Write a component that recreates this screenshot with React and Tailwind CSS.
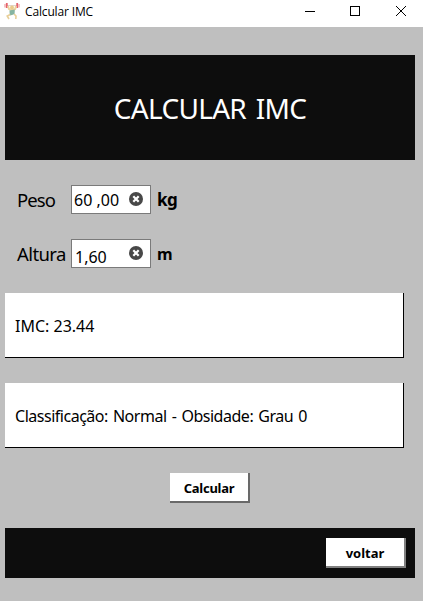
function Lifter() {
  return (
    <svg viewBox="0 0 16 17" className="w-4 h-[17px] ml-1 shrink-0" fill="none">
      <path d="M3 2.5H13" stroke="#d9cbc2" strokeWidth="0.8" />
      <path d="M2.8 0V5M13.2 0V5" stroke="#e5636c" strokeWidth="1.8" />
      <path d="M1 1V4.5M15 1V4.5" stroke="#f0a5a8" strokeWidth="1.3" />
      <path d="M4 3L5 6L8 7.5L11.2 6L12 3" stroke="#ecd3a0" strokeWidth="2" />
      <circle cx="8" cy="4.5" r="2" fill="#e8cc8b" />
      <path d="M5.5 7.5L10.8 6.5L10.6 11L8 12L5.8 12.5Z" fill="#86b5a2" />
      <path d="M6.2 11.5L3.2 13L5 16M10 11L12 13L11.8 16" stroke="#e8cf98" strokeWidth="1.6" />
    </svg>
  );
}

function Clear() {
  return (
    <svg viewBox="0 0 14 14" className="w-3.5 h-3.5 shrink-0">
      <circle cx="7" cy="7" r="7" fill="#484848" />
      <path d="M4.3 4.3L9.7 9.7M9.7 4.3L4.3 9.7" stroke="#fff" strokeWidth="2.2" />
    </svg>
  );
}

function Field({ label, labelClass, value, valueClass, unit, unitClass }) {
  return (
    <div className="flex h-[29px] items-center">
      <div className="w-[71px] pl-[17px] shrink-0 text-[18.5px] leading-[29px]">
        <span className={labelClass}>{label}</span>
      </div>
      <div className="flex w-20 h-[29px] shrink-0 items-start justify-between border border-[#7a7a7a] bg-white pr-[7px] text-base">
        <span className={valueClass}>{value}</span>
        <span className="pt-[6px]"><Clear /></span>
      </div>
      <span className={unitClass}>{unit}</span>
    </div>
  );
}

export default function App() {
  return (
    <div className="w-[423px] h-[601px] overflow-hidden bg-[#bfbfbf] text-black whitespace-nowrap font-['Noto_Sans',sans-serif]">
      <header className="flex h-[27px] items-start bg-white">
        <div className="pt-[3px]"><Lifter /></div>
        <span className="ml-[5px] grow text-[12px] leading-[23px] tracking-[-0.15px] font-['Open_Sans',sans-serif]">Calcular IMC</span>
        <svg viewBox="0 0 118 22" className="w-[118px] h-[22px] shrink-0" fill="none" stroke="#000" shapeRendering="crispEdges">
          <path d="M0 11.5H10" />
          <path d="M45.5 6.5H54.5V15.5H45.5Z" />
          <path d="M91 6L101 16M101 6L91 16" shapeRendering="auto" />
        </svg>
      </header>
      <main className="flex flex-col pl-[5px] pt-7">
        <h1 className="flex w-[410px] h-[105px] items-center justify-center bg-[#0d0d0d] text-[28px] text-white">
          <span className="tracking-[-0.7px] [word-spacing:3px]">CALCULAR IMC</span>
        </h1>
        <div className="-ml-[5px] mt-[25px] flex flex-col gap-[25px]">
          <Field label="Peso" labelClass="tracking-[-0.9px]" value="60 ,00" valueClass="ml-[2px] leading-[29px]" unit="kg" unitClass="ml-[6px] text-[17px] font-bold tracking-[-0.6px]" />
          <Field label="Altura" labelClass="tracking-[-0.6px]" value="1,60" valueClass="ml-[3px] leading-[34px]" unit="m" unitClass="ml-[6px] text-[16px] font-bold" />
        </div>
        <div className="mt-[25px] flex w-[399px] h-[65px] items-center border-r border-b border-black bg-white pl-[10px] pt-[2px] text-base">
          <span>IMC: 23.44</span>
        </div>
        <div className="mt-[25px] flex w-[399px] h-[65px] items-center border-r border-b border-black bg-white pl-[10px] pt-[2px] text-base">
          <span className="tracking-[-0.48px] [word-spacing:1.4px]">Classificação: Normal - Obsidade: Grau 0</span>
        </div>
        <button className="ml-[165px] mt-[25px] flex w-20 h-[30px] items-center justify-center border-r-2 border-b-2 border-r-[#696969] border-b-[#696969] bg-white pt-[3px] text-[13px] font-bold">
          <span className="tracking-[-0.25px]">Calcular</span>
        </button>
        <footer className="mt-[25px] flex w-[410px] h-[50px] items-center justify-end bg-[#0d0d0d] pr-[9px]">
          <button className="flex w-20 h-[30px] items-center justify-center border-r-2 border-b-2 border-[#808080] bg-white pt-[3px] text-[13px] font-bold">
            <span>voltar</span>
          </button>
        </footer>
      </main>
    </div>
  );
}
